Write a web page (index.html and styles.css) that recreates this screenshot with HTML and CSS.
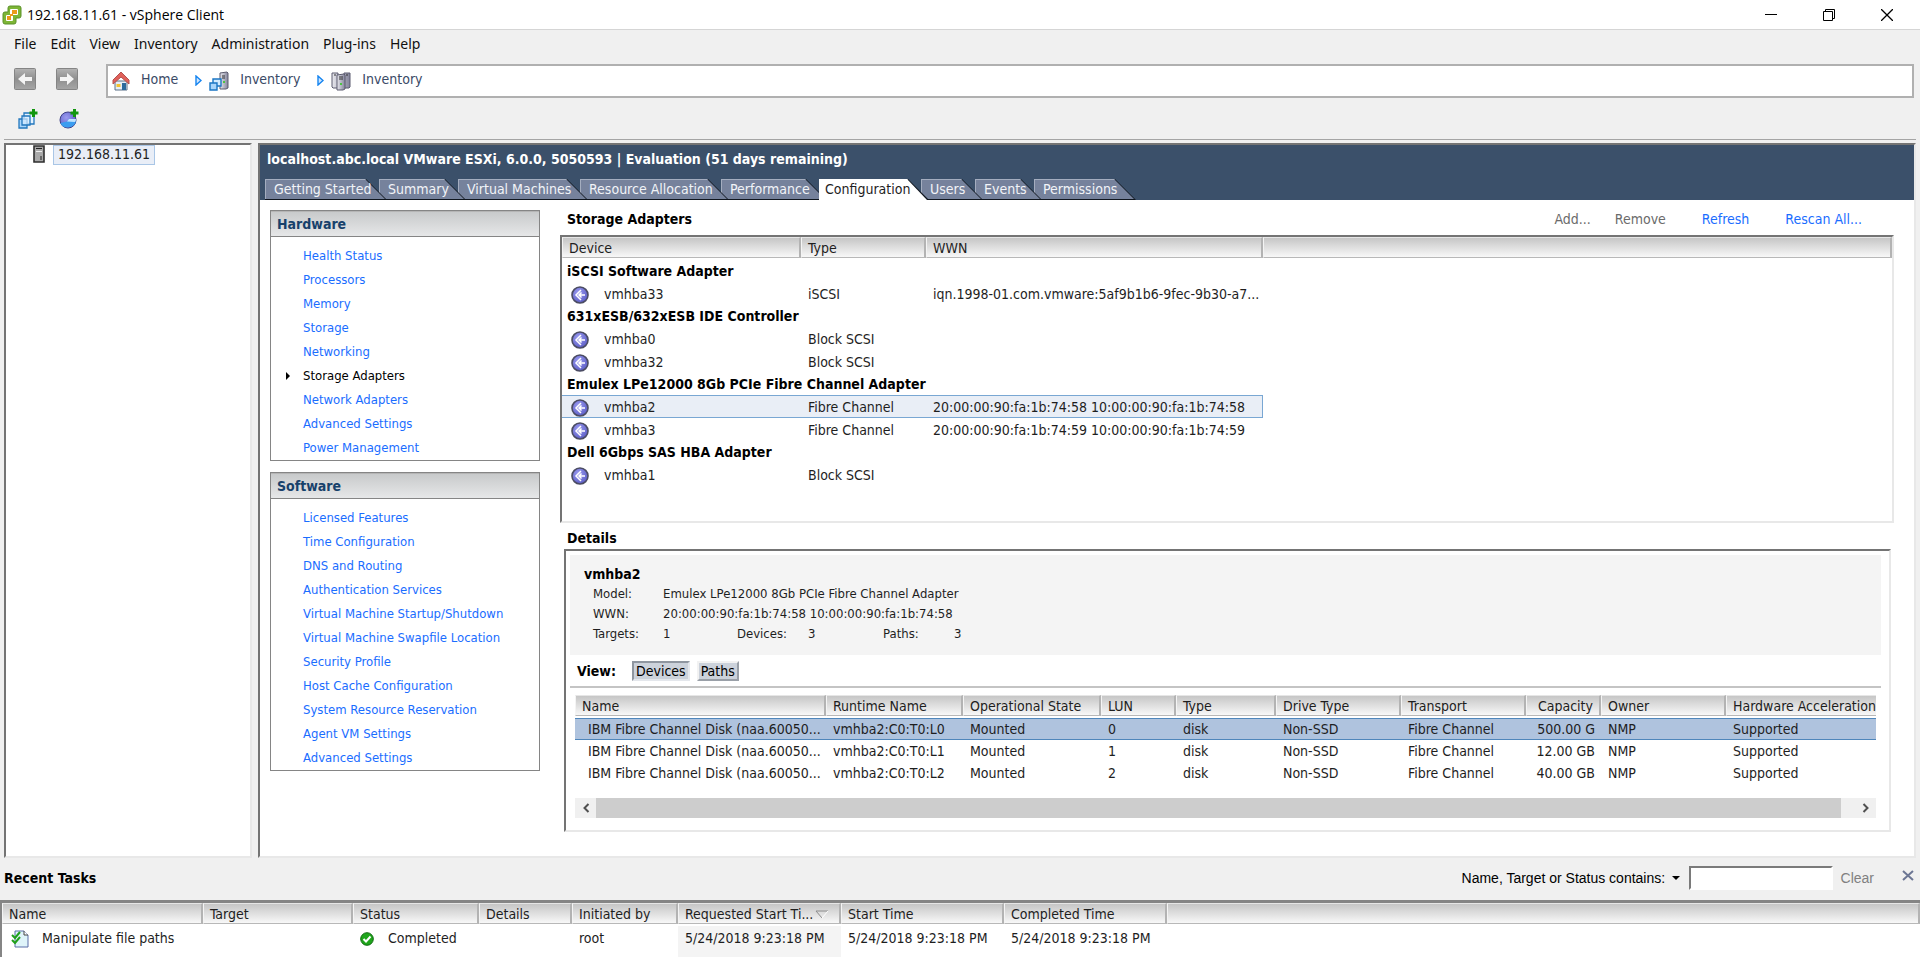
FILE: index.html
```
<!DOCTYPE html>
<html lang="en">
<head>
    <meta charset="utf-8">
    <title>192.168.11.61 - vSphere Client</title>
    <link rel="stylesheet" href="styles.css">
</head>
<body>
    <svg class="defs" aria-hidden="true">
        <defs>
            <radialGradient id="ball" cx="0.4" cy="0.35" r="0.7">
                <stop offset="0" stop-color="#9a9bf0"/>
                <stop offset="1" stop-color="#5a5bc4"/>
            </radialGradient>
            <linearGradient id="navFill" x1="0" y1="0" x2="0" y2="1">
                <stop offset="0" stop-color="#b4b4b4"/>
                <stop offset="0.5" stop-color="#8f8f8f"/>
                <stop offset="1" stop-color="#a6a6a6"/>
            </linearGradient>
            <linearGradient id="server" x1="0" y1="0" x2="1" y2="0">
                <stop offset="0" stop-color="#e8e8ee"/>
                <stop offset="1" stop-color="#83839a"/>
            </linearGradient>
        </defs>
        <symbol id="hba" viewBox="0 0 18 18">
            <circle cx="9" cy="9" r="8" fill="url(#ball)" stroke="#4b4c63" stroke-width="1.600"/>
            <path d="M10 4L5 9l5 5M8 9h6M10.500 6.500L8 9l2.500 2.500" fill="none" stroke="#fff" stroke-width="1.500"/>
        </symbol>
    </svg>

    <header class="titlebar">
        <svg class="logo" width="20" height="20" viewBox="0 0 20 20">
            <path d="M8 1h9q2 0 2 2v8q0 2-2 2h-3v4q0 2-2 2H3q-2 0-2-2V9q0-2 2-2h3V3q0-2 2-2z" fill="#7db535" stroke="#5a9128"/>
            <path d="M9 4h6q1 0 1 1v4q0 1-1 1h-4v5q0 1-1 1H5q-1 0-1-1v-4q0-1 1-1h3V5q0-1 1-1z" fill="#fff"/>
            <path d="M10 5h5v4h-4v2H9v4H5v-4h3V9h2z" fill="#eb9a1a"/>
        </svg>
        <h1>192.168.11.61 - vSphere Client</h1>
        <div class="window-buttons">
            <button aria-label="Minimize"><svg width="12" height="12"><path d="M0 5.500h12" stroke="#000"/></svg></button>
            <button aria-label="Restore"><svg width="12" height="12"><path d="M.5 2.500h9v9h-9zM2.500 2.500v-2h9v9h-2" fill="none" stroke="#000"/></svg></button>
            <button aria-label="Close"><svg width="12" height="12"><path d="M0 0l12 12M12 0L0 12" stroke="#000" stroke-width="1.300"/></svg></button>
        </div>
    </header>

    <nav class="menu">
        <button>File</button>
        <button>Edit</button>
        <button>View</button>
        <button>Inventory</button>
        <button>Administration</button>
        <button>Plug-ins</button>
        <button>Help</button>
    </nav>

    <div class="location">
        <button class="nav-button" aria-label="Back">
            <svg width="22" height="22" viewBox="0 0 22 22"><rect x=".5" y=".5" width="21" height="21" rx="1" fill="url(#navFill)" stroke="#858585"/><path d="M4 11l7-6v4h7v4h-7v4z" fill="#f4f4f4"/></svg>
        </button>
        <button class="nav-button" aria-label="Forward">
            <svg width="22" height="22" viewBox="0 0 22 22"><rect x=".5" y=".5" width="21" height="21" rx="1" fill="url(#navFill)" stroke="#858585"/><path d="M18 11l-7-6v4H4v4h7v4z" fill="#f4f4f4"/></svg>
        </button>
        <div class="breadcrumb">
            <svg width="18" height="20" viewBox="0 0 18 20">
                <path d="M3 10h12v9H3z" fill="#e6edf5" stroke="#5b7088"/>
                <path d="M9 1L1 9v4l8-7 8 7V9z" fill="#e0605a" stroke="#b3534f"/>
                <path d="M4.500 13h4v3h-4z" fill="#f2c230"/>
                <path d="M10 12h4v7h-4z" fill="#2c6a9c"/>
            </svg>
            <a href="#">Home</a>
            <svg class="crumb-arrow" width="7" height="11" viewBox="0 0 7 11"><path d="M1 1l5 4.500L1 10z" fill="#cfe6ff" stroke="#1484f0" stroke-width="1.400"/></svg>
            <svg width="20" height="20" viewBox="0 0 20 20">
                <path d="M11 2l7-1 1 1v15l-2 1h-6z" fill="url(#server)" stroke="#5c5c70"/>
                <path d="M13 5h3M13 7h3" stroke="#333"/><path d="M14 10h2v2h-2z" fill="#4bc442"/>
                <path d="M4 8h8v7H4z" fill="#d3ebff" stroke="#1b76c4" stroke-width="1.400"/>
                <path d="M1 12h7v7H1z" fill="#a9d5fb" stroke="#1b76c4" stroke-width="1.400"/>
            </svg>
            <a href="#">Inventory</a>
            <svg class="crumb-arrow" width="7" height="11" viewBox="0 0 7 11"><path d="M1 1l5 4.500L1 10z" fill="#cfe6ff" stroke="#1484f0" stroke-width="1.400"/></svg>
            <svg width="20" height="20" viewBox="0 0 20 20">
                <path d="M1 2h6v15H2l-1-1zM13 2h6v14l-1 1h-5z" fill="url(#server)" stroke="#5c5c70"/>
                <path d="M6 4l7-1 1 1v14l-2 1H6z" fill="url(#server)" stroke="#5c5c70"/>
                <path d="M8 6h4M8 8h4M3 4h2M15 4h2" stroke="#333"/><path d="M9 12h2v2H9z" fill="#4bc442"/>
            </svg>
            <a href="#">Inventory</a>
        </div>
    </div>

    <div class="toolbar">
        <button aria-label="New virtual machine">
            <svg width="20" height="20" viewBox="0 0 20 20">
                <path d="M6 4h10v11H6z" fill="#e5f3ff" stroke="#2277bd" stroke-width="1.300"/>
                <path d="M1 10h8v9H1z" fill="#a9d5fb" stroke="#2277bd" stroke-width="1.300"/>
                <path d="M4 7h8v9H4z" fill="#d9edff" fill-opacity=".7" stroke="#2277bd" stroke-width="1.300"/>
                <path d="M15.500 0v8M11.500 4h8" stroke="#12960d" stroke-width="3"/>
            </svg>
        </button>
        <button aria-label="New resource pool">
            <svg width="20" height="20" viewBox="0 0 20 20">
                <circle cx="9" cy="11" r="8" fill="url(#ball)" stroke="#3c3f86"/>
                <path d="M1.500 14L8 12.500l2-2.500h7q0 8-8 8.500-6 0-7.500-4.500z" fill="#3b9df0"/>
                <path d="M8 12.500l2-2.500h7q0 2-1 3z" fill="#bfe3ff"/>
                <path d="M15.500 0v8M11.500 4h8" stroke="#12960d" stroke-width="3"/>
            </svg>
        </button>
    </div>

    <main class="workspace">
        <aside class="tree">
            <svg width="12" height="18" viewBox="0 0 12 18">
                <path d="M1 1h10v16H1z" fill="#a9a9a9" stroke="#2f2f2f" stroke-width="1.600"/>
                <path d="M3 3.500h6" stroke="#222"/><path d="M3 6.500h6" stroke="#eee"/><path d="M7 11h2v4H7z" fill="#666"/>
            </svg>
            <a href="#">192.168.11.61</a>
        </aside>

        <section class="host">
            <div class="host-header">
                <h2>localhost.abc.local VMware ESXi, 6.0.0, 5050593 | Evaluation (51 days remaining)</h2>
                <div class="tabs">
                    <button class="tab tab-started">Getting Started</button>
                    <button class="tab tab-summary">Summary</button>
                    <button class="tab tab-machines">Virtual Machines</button>
                    <button class="tab tab-resources">Resource Allocation</button>
                    <button class="tab tab-performance">Performance</button>
                    <button class="tab tab-configuration active">Configuration</button>
                    <button class="tab tab-users">Users</button>
                    <button class="tab tab-events">Events</button>
                    <button class="tab tab-permissions">Permissions</button>
                </div>
            </div>

            <div class="host-body">
                <div class="side">
                    <nav class="box">
                        <h3>Hardware</h3>
                        <ul>
                            <li><a href="#">Health Status</a></li>
                            <li><a href="#">Processors</a></li>
                            <li><a href="#">Memory</a></li>
                            <li><a href="#">Storage</a></li>
                            <li><a href="#">Networking</a></li>
                            <li class="current"><a href="#">Storage Adapters</a></li>
                            <li><a href="#">Network Adapters</a></li>
                            <li><a href="#">Advanced Settings</a></li>
                            <li><a href="#">Power Management</a></li>
                        </ul>
                    </nav>
                    <nav class="box">
                        <h3>Software</h3>
                        <ul>
                            <li><a href="#">Licensed Features</a></li>
                            <li><a href="#">Time Configuration</a></li>
                            <li><a href="#">DNS and Routing</a></li>
                            <li><a href="#">Authentication Services</a></li>
                            <li><a href="#">Virtual Machine Startup/Shutdown</a></li>
                            <li><a href="#">Virtual Machine Swapfile Location</a></li>
                            <li><a href="#">Security Profile</a></li>
                            <li><a href="#">Host Cache Configuration</a></li>
                            <li><a href="#">System Resource Reservation</a></li>
                            <li><a href="#">Agent VM Settings</a></li>
                            <li><a href="#">Advanced Settings</a></li>
                        </ul>
                    </nav>
                </div>

                <div class="storage">
                    <div class="storage-head">
                        <h3>Storage Adapters</h3>
                        <button disabled>Add...</button>
                        <button disabled>Remove</button>
                        <button>Refresh</button>
                        <button>Rescan All...</button>
                    </div>

                    <div class="adapters">
                        <table class="grid adapter-table">
                            <colgroup>
                                <col class="col-device"><col class="col-type"><col class="col-wwn"><col>
                            </colgroup>
                            <thead>
                                <tr><th>Device</th><th>Type</th><th>WWN</th><th></th></tr>
                            </thead>
                            <tbody>
                                <tr class="group"><td colspan="4">iSCSI Software Adapter</td></tr>
                                <tr><td><svg><use href="#hba"/></svg>vmhba33</td><td>iSCSI</td><td>iqn.1998-01.com.vmware:5af9b1b6-9fec-9b30-a7...</td><td></td></tr>
                                <tr class="group"><td colspan="4">631xESB/632xESB IDE Controller</td></tr>
                                <tr><td><svg><use href="#hba"/></svg>vmhba0</td><td>Block SCSI</td><td></td><td></td></tr>
                                <tr><td><svg><use href="#hba"/></svg>vmhba32</td><td>Block SCSI</td><td></td><td></td></tr>
                                <tr class="group"><td colspan="4">Emulex LPe12000 8Gb PCIe Fibre Channel Adapter</td></tr>
                                <tr class="selected"><td><svg><use href="#hba"/></svg>vmhba2</td><td>Fibre Channel</td><td>20:00:00:90:fa:1b:74:58 10:00:00:90:fa:1b:74:58</td><td></td></tr>
                                <tr><td><svg><use href="#hba"/></svg>vmhba3</td><td>Fibre Channel</td><td>20:00:00:90:fa:1b:74:59 10:00:00:90:fa:1b:74:59</td><td></td></tr>
                                <tr class="group"><td colspan="4">Dell 6Gbps SAS HBA Adapter</td></tr>
                                <tr><td><svg><use href="#hba"/></svg>vmhba1</td><td>Block SCSI</td><td></td><td></td></tr>
                            </tbody>
                        </table>
                    </div>

                    <h3 class="details-title">Details</h3>
                    <div class="details">
                        <div class="summary">
                            <h4>vmhba2</h4>
                            <div class="facts">
                                <span>Model:</span><span class="wide">Emulex LPe12000 8Gb PCIe Fibre Channel Adapter</span>
                                <span>WWN:</span><span class="wide">20:00:00:90:fa:1b:74:58 10:00:00:90:fa:1b:74:58</span>
                                <span>Targets:</span><span>1</span>
                                <span>Devices:</span><span>3</span>
                                <span>Paths:</span><span>3</span>
                            </div>
                        </div>
                        <div class="view">
                            <b>View:</b>
                            <button class="pressed">Devices</button>
                            <button>Paths</button>
                        </div>
                        <div class="devices">
                            <table class="grid device-table">
                                <colgroup>
                                    <col class="col-name"><col class="col-runtime"><col class="col-state"><col class="col-lun"><col class="col-kind"><col class="col-drive"><col class="col-transport"><col class="col-capacity"><col class="col-owner"><col>
                                </colgroup>
                                <thead>
                                    <tr><th>Name</th><th>Runtime Name</th><th>Operational State</th><th>LUN</th><th>Type</th><th>Drive Type</th><th>Transport</th><th class="num">Capacity</th><th>Owner</th><th>Hardware Acceleration</th></tr>
                                </thead>
                                <tbody>
                                    <tr class="selected"><td>IBM Fibre Channel Disk (naa.60050...</td><td>vmhba2:C0:T0:L0</td><td>Mounted</td><td>0</td><td>disk</td><td>Non-SSD</td><td>Fibre Channel</td><td class="num">500.00 G</td><td>NMP</td><td>Supported</td></tr>
                                    <tr><td>IBM Fibre Channel Disk (naa.60050...</td><td>vmhba2:C0:T0:L1</td><td>Mounted</td><td>1</td><td>disk</td><td>Non-SSD</td><td>Fibre Channel</td><td class="num">12.00 GB</td><td>NMP</td><td>Supported</td></tr>
                                    <tr><td>IBM Fibre Channel Disk (naa.60050...</td><td>vmhba2:C0:T0:L2</td><td>Mounted</td><td>2</td><td>disk</td><td>Non-SSD</td><td>Fibre Channel</td><td class="num">40.00 GB</td><td>NMP</td><td>Supported</td></tr>
                                </tbody>
                            </table>
                            <div class="scrollbar">
                                <button aria-label="Scroll left"><svg width="8" height="10"><path d="M6.500 1l-4 4 4 4" fill="none" stroke="#505050" stroke-width="2"/></svg></button>
                                <div class="thumb"></div>
                                <button aria-label="Scroll right"><svg width="8" height="10"><path d="M1.500 1l4 4-4 4" fill="none" stroke="#505050" stroke-width="2"/></svg></button>
                            </div>
                        </div>
                    </div>
                </div>
            </div>
        </section>
    </main>

    <section class="tasks">
        <div class="tasks-head">
            <h3>Recent Tasks</h3>
            <div class="filter">
                <select aria-label="Filter tasks by">
                    <option>Name, Target or Status contains:</option>
                </select>
            </div>
            <input type="text" aria-label="Filter text">
            <button class="clear" disabled>Clear</button>
            <button class="close" aria-label="Close recent tasks"><svg width="12" height="11"><path d="M1 1l10 9M11 1L1 10" stroke="#6c7694" stroke-width="2"/></svg></button>
        </div>
        <div class="task-list">
            <table class="grid task-table">
                <colgroup>
                    <col class="col-task"><col class="col-target"><col class="col-status"><col class="col-details"><col class="col-user"><col class="col-time"><col class="col-time"><col class="col-time"><col>
                </colgroup>
                <thead>
                    <tr><th>Name</th><th>Target</th><th>Status</th><th>Details</th><th>Initiated by</th><th>Requested Start Ti...<svg class="sort" width="14" height="9"><path d="M13 1H1l6 7" fill="none" stroke="#8c8c8c"/><path d="M7 8l6-7" stroke="#fff"/></svg></th><th>Start Time</th><th>Completed Time</th><th></th></tr>
                </thead>
                <tbody>
                    <tr>
                        <td><svg class="task-icon" viewBox="0 0 18 18">
                            <path d="M4 1h9l4 4v12H4z" fill="#dff4fa" stroke="#5b6fa8"/>
                            <path d="M13 1v4h4" fill="#fff" stroke="#444"/>
                            <path d="M1 5l3 3 5-6M1 10l3 3 5-6" fill="none" stroke="#1fa01a" stroke-width="2"/>
                        </svg>Manipulate file paths</td>
                        <td></td>
                        <td><svg class="status-icon" viewBox="0 0 14 14">
                            <circle cx="7" cy="7" r="6.300" fill="#1fa51b" stroke="#0f6a10"/>
                            <path d="M3.500 7l2.500 2.500L10.500 4.500" fill="none" stroke="#fff" stroke-width="2"/>
                        </svg>Completed</td>
                        <td></td>
                        <td>root</td>
                        <td class="sorted">5/24/2018 9:23:18 PM</td>
                        <td>5/24/2018 9:23:18 PM</td>
                        <td>5/24/2018 9:23:18 PM</td>
                        <td></td>
                    </tr>
                </tbody>
            </table>
        </div>
    </section>
</body>
</html>
```
FILE: styles.css
```
* {
    box-sizing: border-box;
}
body {
    margin: 0;
    min-height: 100vh;
    display: flex;
    flex-direction: column;
    background-color: #f0f0f0;
    color: #1e1e1e;
    font-family: "DejaVu Sans Condensed", "DejaVu Sans", sans-serif;
    font-size: 14px;
    line-height: 20px;
    white-space: nowrap;
}
h1, h2, h3, h4, ul {
    margin: 0;
    padding: 0;
}
h3, h4 {
    font-size: 14px;
    color: #000;
}
button, input, select {
    font: inherit;
    color: inherit;
    margin: 0;
    padding: 0;
    border: 0;
    border-radius: 0;
    background: none;
}
a {
    color: #1a6dff;
    text-decoration: none;
}
svg {
    flex: none;
}
.defs {
    position: absolute;
    width: 0;
    height: 0;
}

/* title bar and menu */
.titlebar {
    display: flex;
    align-items: center;
    height: 30px;
    padding: 0 4px 0 2px;
    background-color: #fff;
    border-bottom: 1px solid #d5d5d5;
}
.titlebar h1 {
    flex: 1;
    padding-left: 5px;
    font-family: "Open Sans", sans-serif;
    font-size: 14px;
    font-weight: normal;
    color: #000;
}
.window-buttons {
    display: flex;
}
.window-buttons button {
    display: flex;
    align-items: center;
    justify-content: center;
    width: 58px;
    height: 29px;
}
.menu {
    display: flex;
    gap: 14px;
    padding: 4px 14px;
    font-family: "Noto Sans", sans-serif;
    font-size: 14px;
    color: #111;
}
.location {
    display: flex;
    align-items: center;
    padding: 6px 6px 0 14px;
}
.nav-button {
    display: flex;
    width: 42px;
    margin-bottom: 4px;
}
.breadcrumb {
    flex: 1;
    display: flex;
    align-items: center;
    height: 34px;
    margin-left: 8px;
    padding-left: 4px;
    background-color: #fff;
    border: 2px solid #b0b0b0;
}
.breadcrumb a {
    margin: 0 17px 4px 11px;
    color: #3a4a66;
}
.breadcrumb .crumb-arrow {
    margin: 0 7px 2px 0;
}
.toolbar {
    display: flex;
    gap: 21px;
    height: 42px;
    margin: 0 4px 3px;
    padding: 11px 14px;
    border-bottom: 1px solid #a5a5a5;
}
.toolbar button {
    display: flex;
}

/* main area */
.workspace {
    flex: 1;
    display: flex;
    gap: 6px;
    padding: 0 4px;
}
.tree, .host, .adapters, .details {
    background-color: #fff;
    border: 2px solid #e8e8e8;
    border-top-color: #747474;
    border-left-color: #747474;
}
.tree {
    flex: none;
    display: flex;
    align-items: flex-start;
    gap: 8px;
    width: 248px;
    padding-left: 27px;
}
.tree a {
    padding: 0 4px;
    height: 20px;
    line-height: 17px;
    color: #1e1e1e;
    background-color: #e9eef7;
    border: 1px solid #a9c6e6;
}
.host {
    flex: 1;
    min-width: 0;
}
.host-header {
    padding: 4px 0 0 5px;
    background-color: #3b506a;
}
.host-header h2 {
    height: 30px;
    padding-left: 2px;
    font-size: 14px;
    color: #fff;
}
.tabs {
    display: flex;
}
.tab {
    position: relative;
    flex: none;
    height: 21px;
    margin-right: -8px;
    padding: 0 0 2px 9px;
    line-height: 18px;
    text-align: left;
    color: #f2f4f8;
    background-color: #10161f;
    clip-path: polygon(0 0, calc(100% - 21px) 0, 100% 100%, 0 100%);
}
/* face of the tab, leaves the dark slanted edge visible */
.tab::before {
    content: "";
    position: absolute;
    z-index: -1;
    inset: 0 2px 1px 0;
    background-color: #76829c;
    border-top: 1px solid #a4adbf;
    border-left: 1px solid #a4adbf;
    clip-path: polygon(0 0, calc(100% - 20px) 0, 100% 100%, 0 100%);
}
.tab.active {
    padding-left: 6px;
    color: #1e1e1e;
}
.tab.active::before {
    inset: 0 2px 0 0;
    background-color: #fff;
    border-color: #fff;
}
.tab-started { width: 122px; z-index: 8; }
.tab-summary { width: 87px; z-index: 7; }
.tab-machines { width: 130px; z-index: 6; }
.tab-resources { width: 149px; z-index: 5; }
.tab-performance { width: 106px; z-index: 4; }
.tab-configuration { width: 110px; z-index: 9; }
.tab-users { width: 62px; z-index: 3; }
.tab-events { width: 67px; z-index: 2; }
.tab-permissions { width: 102px; z-index: 1; }

.host-body {
    display: flex;
    gap: 20px;
    padding: 10px 20px 24px 10px;
}
.side {
    flex: none;
    width: 270px;
}
.box {
    margin-bottom: 11px;
    border: 1px solid #858585;
}
.box h3 {
    height: 26px;
    padding: 2px 6px;
    color: #17416b;
    background-image: linear-gradient(#c8cacb, #e6e7e8);
    border-top: 1px solid #b5b5b5;
    border-bottom: 1px solid #858585;
}
.box ul {
    padding: 7px 0 0 32px;
    list-style: none;
    font-size: 13px;
}
.box li {
    line-height: 24px;
}
.box .current {
    position: relative;
}
.box .current::before {
    content: "";
    position: absolute;
    left: -17px;
    top: 8px;
    border: 4px solid transparent;
    border-left-color: #000;
    border-right: 0;
}
.box .current a {
    color: #000;
}
.storage {
    flex: 1;
    min-width: 0;
}
.storage-head {
    display: flex;
    gap: 36px;
    height: 25px;
    padding: 0 32px 0 7px;
    line-height: 18px;
}
.storage-head h3 {
    flex: 1;
}
.storage-head button {
    height: 18px;
    color: #1a6dff;
}
.storage-head button:disabled {
    color: #6b6b6b;
}
.storage-head button:first-of-type {
    margin-right: -12px;
}

/* list views */
.grid {
    width: 100%;
    table-layout: fixed;
    border-collapse: separate;
    border-spacing: 0;
}
.grid th {
    height: 21px;
    padding: 0 0 0 6px;
    line-height: 18px;
    font-weight: normal;
    text-align: left;
    background-image: linear-gradient(#c6c6c6, #f8f8f8);
    border-top: 1px solid #e6e6e6;
    border-right: 2px solid #b3b3b3;
    border-bottom: 1px solid #b8b8b8;
    border-left: 1px solid #f4f4f4;
}
.grid tbody::before {
    content: "";
    display: table-row;
    height: 2px;
}
.grid td {
    height: 23px;
    padding: 0 0 0 7px;
    line-height: 20px;
}
.grid td svg {
    display: inline-block;
    width: 18px;
    height: 18px;
    vertical-align: middle;
}
.grid .num {
    padding-right: 6px;
    text-align: right;
}
.adapters {
    min-height: 288px;
}
.adapter-table td:first-child {
    padding-left: 9px;
}
.adapter-table td svg {
    margin-right: 15px;
}
.adapter-table .group td {
    height: 22px;
    padding-left: 5px;
    font-weight: bold;
    color: #000;
}
.adapter-table .selected td:not(:last-child) {
    background-color: #e9eef6;
    border-top: 1px solid #79a7d3;
    border-bottom: 1px solid #79a7d3;
}
.adapter-table .selected td:nth-child(3) {
    border-right: 1px solid #79a7d3;
}
.col-device { width: 239px; }
.col-type { width: 125px; }
.col-wwn { width: 337px; }

.details-title {
    padding: 5px 0 1px 7px;
}
.details {
    margin: 0 3px 0 4px;
    padding: 4px 8px 12px 4px;
}
.summary {
    height: 100px;
    padding: 9px 14px;
    background-color: #f4f4f4;
}
.facts {
    display: grid;
    grid-template-columns: 70px 74px 71px 75px 71px 1fr;
    padding-left: 9px;
    font-size: 13px;
}
.facts .wide {
    grid-column: 2 / -1;
}
.view {
    display: flex;
    align-items: center;
    gap: 7px;
    height: 33px;
    padding-left: 7px;
    border-bottom: 2px solid #c4c4c4;
    color: #000;
}
.view b {
    width: 48px;
}
.view button {
    height: 20px;
    padding: 0 2px;
    line-height: 16px;
    background-color: #ccd2db;
    border: 2px solid #f2f2f2;
    border-right-color: #9aa0a8;
    border-bottom-color: #9aa0a8;
}
.view .pressed {
    border-color: #8f96a0 #e4e7ec #e4e7ec #8f96a0;
}
.devices {
    margin: 7px 5px 0;
    overflow: hidden;
}
.device-table {
    margin-bottom: 14px;
}
.device-table thead th {
    overflow: hidden;
}
.device-table th:last-child {
    border-right: 0;
}
.device-table td {
    height: 22px;
}
.device-table td:first-child {
    padding-left: 13px;
}
.device-table .selected td {
    background-color: #afc3de;
    border-top: 1px solid #4f86bb;
    border-bottom: 1px solid #4f86bb;
}
.col-name { width: 251px; }
.col-runtime { width: 137px; }
.col-state { width: 138px; }
.col-lun { width: 75px; }
.col-kind { width: 100px; }
.col-drive { width: 125px; }
.col-transport { width: 125px; }
.col-capacity { width: 75px; }
.col-owner { width: 125px; }

.scrollbar {
    display: flex;
    height: 20px;
    background-color: #f0f0f0;
}
.scrollbar button {
    display: flex;
    align-items: center;
    justify-content: center;
    width: 21px;
}
.scrollbar .thumb {
    flex: 1;
    margin-right: 14px;
    background-color: #cdcdcd;
}

/* recent tasks */
.tasks-head {
    display: flex;
    align-items: center;
    height: 42px;
    padding: 0 6px 2px 4px;
}
.tasks-head h3 {
    flex: 1;
}
.filter {
    display: flex;
    align-items: center;
    margin-right: 9px;
    font-family: "Liberation Sans", sans-serif;
    font-size: 14px;
    color: #000;
}
.filter select {
    appearance: none;
}
.filter::after {
    content: "";
    margin-left: 6px;
    border: 4px solid transparent;
    border-top-color: #000;
    border-bottom: 0;
}
.tasks-head input {
    width: 144px;
    height: 24px;
    margin-right: 8px;
    background-color: #fff;
    border: 2px solid #fff;
    border-top-color: #7a7a7a;
    border-left-color: #7a7a7a;
}
.tasks-head .clear {
    font-family: "Liberation Sans", sans-serif;
    font-size: 14px;
    color: #808080;
}
.tasks-head .close {
    display: flex;
    margin: 0 0 6px 28px;
}
.task-list {
    background-color: #fff;
    border-top: 3px solid #858585;
    border-left: 2px solid #858585;
}
.task-table td {
    height: 31px;
    padding-bottom: 8px;
}
.task-table .task-icon {
    margin: 0 13px 0 2px;
}
.task-table .status-icon {
    width: 14px;
    height: 14px;
    margin-right: 14px;
}
.task-table .sort {
    margin-left: 2px;
}
.task-table .sorted {
    background-color: #f4f4f4;
}
.col-task { width: 201px; }
.col-target { width: 150px; }
.col-status { width: 126px; }
.col-details { width: 93px; }
.col-user { width: 106px; }
.col-time { width: 163px; }
```
